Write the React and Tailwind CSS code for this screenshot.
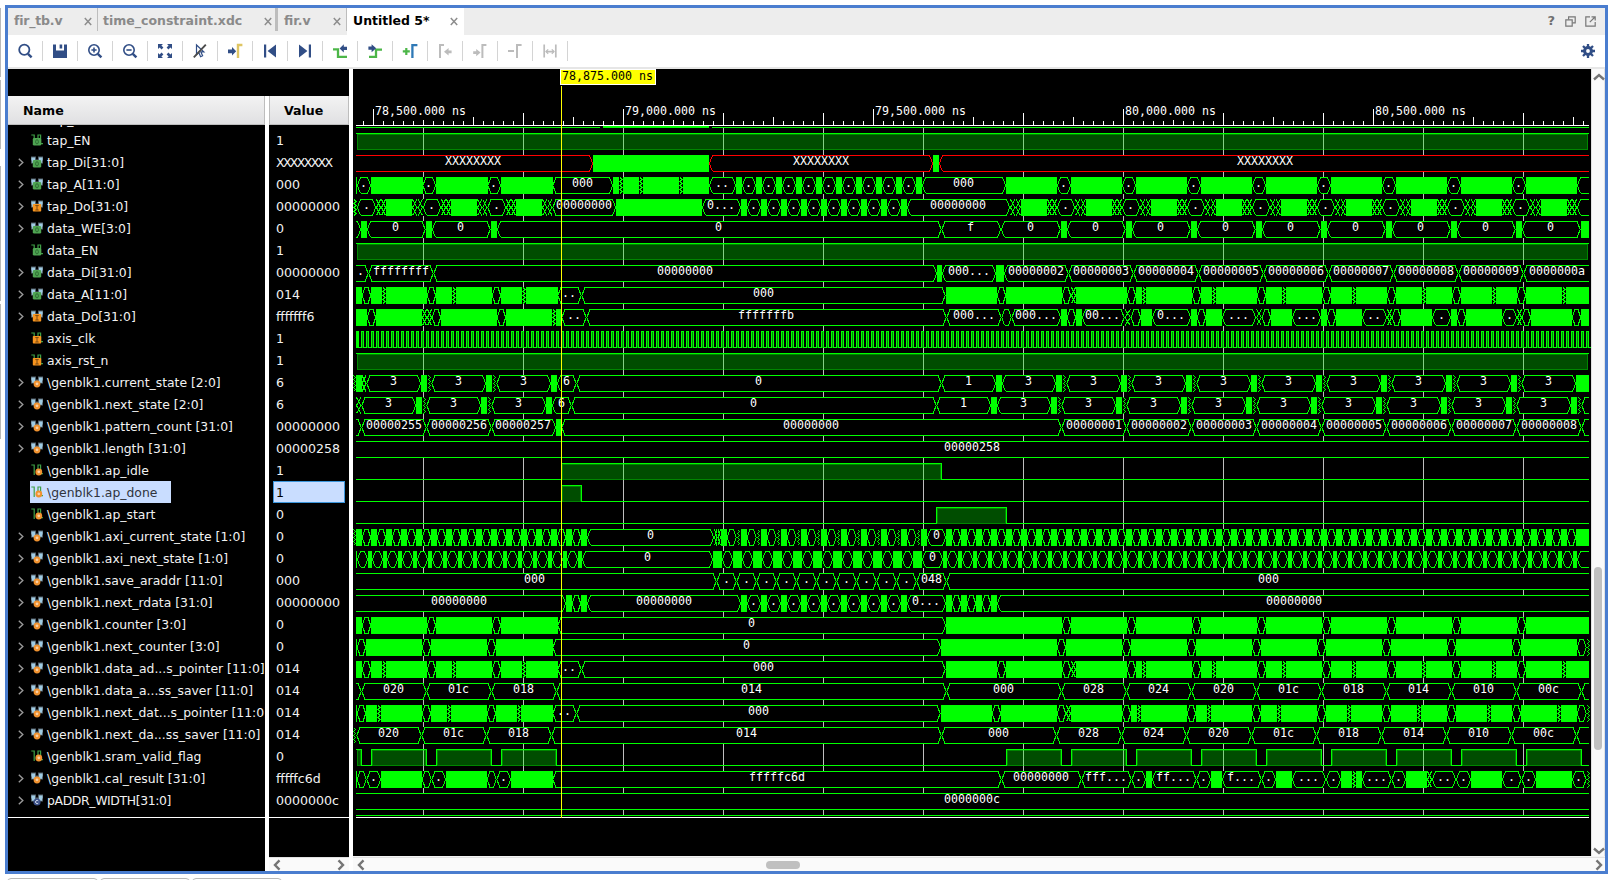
import React from "react";

const GREEN = "#00ff00";
const X_MIN = 356;
const X_MAX = 1589;
const ROW_TOP = 133;
const PITCH = 22;

const rep = (n, step, fn) => Array.from({ length: n }, (_, k) => fn(k * step)).join(" ");

const pointer = (d, first, last) =>
  `${first} s${382 - d} z${386 - d} s${427 - d} h${436 - d} s${452 - d} z${456 - d} s${492 - d} h${501 - d} s${522 - d} z${526 - d} s${557.5 - d} h${581.5 - d}:.. h${945.5 - d}:000 s${997 - d} h${1006 - d} s${1062 - d} h${1071 - d} z${1076 - d} s${1127 - d} h${1136 - d} s${1142 - d} z${1146 - d} s${1192 - d} h${1201 - d} s${1212 - d} z${1216 - d} s${1257 - d} h${1266 - d} s${1282 - d} z${1286 - d} s${1322 - d} h${1331 - d} s${1352 - d} z${1356 - d} s${1387 - d} h${1396 - d} s${1422 - d} z${1426 - d} s${1452 - d} h${1461 - d} s${1492 - d} z${1496 - d} s${1517 - d} h${1526 - d} s${1562 - d} z${1566 - d} ${last}`;

const saver = (d, first) =>
  `${first} h${426.5 - d}:020 h${491.5 - d}:01c h${556.5 - d}:018 h${946.5 - d}:014 h${1061.5 - d}:000 h${1126.5 - d}:028 h${1191.5 - d}:024 h${1256.5 - d}:020 h${1321.5 - d}:01c h${1386.5 - d}:018 h${1451.5 - d}:014 h${1516.5 - d}:010 h${1581.5 - d}:00c h1600`;

/* icon: s = scalar, b = bus; second letter: o = output, i = input, v = variable, c = constant.
   bus: start x followed by tokens "<kind><end x>[:label]", kind s = dense, h = value,
   r = undefined value, z = glitch. bit: high intervals. */
const SIGNALS = [
  { name: "tap_EN", value: "1", icon: "so", bit: [[340, 1600]] },
  { name: "tap_Di[31:0]", value: "XXXXXXXX", icon: "bo", bus: "340 r593:XXXXXXXX s709 r933:XXXXXXXX s939 r1600:XXXXXXXX" },
  {
    name: "tap_A[11:0]", value: "000", icon: "bo",
    bus: `356 s357 h371:. s422.5 h436:. s487.5 h501:. s552.5 h613:000 s619 z623 s639 z643 s679 z683 s709 h736:.. s742 ${rep(9, 20, (k) => `h${756 + k}:. s${762 + k}`)} h1006:000 ${rep(8, 65, (k) => `s${1057 + k} h${1071 + k}:.`)} s1577 h1600`,
  },
  {
    name: "tap_Do[31:0]", value: "00000000", icon: "bi",
    bus: `353 z357 h376:. z386 s412 z423 h441:. z451 s477 z487.5 h506:. z516 s542 z552.5 h616:00000000 s702 h741:0... s747 ${rep(8, 20, (k) => `h${761 + k}:. s${767 + k}`)} h1010:00000000 ${rep(8, 65, (k) => `z${1021 + k} s${1047 + k} z${1057 + k} h${1075 + k}:.`)} z1541 s1567 z1577 h1600`,
  },
  {
    name: "data_WE[3:0]", value: "0", icon: "bo",
    bus: `340 h361 s367 h425.5:0 s432 h490.5:0 s497 h941.5:0 h1001:f h1060.5:0 s1067 ${rep(7, 65, (k) => `h${1125.5 + k}:0 s${1132 + k}`)} h1580.5:0 s1589`,
  },
  { name: "data_EN", value: "1", icon: "so", bit: [[340, 1600]] },
  {
    name: "data_Di[31:0]", value: "00000000", icon: "bo",
    bus: "340 h368.5:. h433.5:ffffffff h937:00000000 s942 h996:000... s1004 h1068.5:00000002 h1133.5:00000003 h1198.5:00000004 h1263.5:00000005 h1328.5:00000006 h1393.5:00000007 h1458.5:00000008 h1523.5:00000009 h1600:0000000a",
  },
  { name: "data_A[11:0]", value: "014", icon: "bo", bus: pointer(0, "356 s362 h371", "s1589") },
  {
    name: "data_Do[31:0]", value: "fffffff6", icon: "bi",
    bus: "356 s367 h376 s422 z432 h441 s497 h506 s552 z556 s561.5 h586.5:.. h946.5:fffffffb h1001.5:000... h1011.5 h1061:000... s1067 h1076 s1082 h1124.5:00... z1131 h1141 s1152 h1191:0... s1197 h1206 s1222 h1256:... z1262 h1271 s1292 h1321:... s1327 h1336 s1362 h1387:.. z1392 h1401 s1432 h1451:. s1457 h1466 s1502 h1517:. z1522 h1531 s1572 h1581 s1589",
  },
  { name: "axis_clk", value: "1", icon: "si", clock: true },
  { name: "axis_rst_n", value: "1", icon: "si", bit: [[340, 1600]] },
  {
    name: "\\genblk1.current_state [2:0]", value: "6", icon: "bv",
    bus: `353 z356 s361.5 z366.5 h421:3 s427 z431.5 h486:3 s492 z496.5 h551:3 s557 h576.5:6 h941.5:0 h996:1 s1002 h1056:3 ${rep(8, 65, (k) => `s${1062 + k} z${1066.5 + k} h${1121 + k}:3`)} s1589`,
  },
  {
    name: "\\genblk1.next_state [2:0]", value: "6", icon: "bv",
    bus: `356 z361.5 h416:3 s422 z426.5 h481:3 s487 z491.5 h546:3 s552 h571.5:6 h936.5:0 h991:1 s997 h1051:3 ${rep(8, 65, (k) => `s${1057 + k} z${1061.5 + k} h${1116 + k}:3`)} s1577 z1581.5 h1600`,
  },
  {
    name: "\\genblk1.pattern_count [31:0]", value: "00000000", icon: "bv",
    bus: `340 h361.5 h426.5:00000255 h491.5:00000256 h556:00000257 s561.5 h1061.5:00000000 ${[1, 2, 3, 4, 5, 6, 7, 8].map((n) => `h${1061.5 + 65 * n}:0000000${n}`).join(" ")} h1600`,
  },
  { name: "\\genblk1.length [31:0]", value: "00000258", icon: "bv", bus: "340 h1600:00000258" },
  { name: "\\genblk1.ap_idle", value: "1", icon: "sv", bit: [[561, 941]] },
  { name: "\\genblk1.ap_done", value: "1", icon: "sv", bit: [[561, 581]], selected: true },
  { name: "\\genblk1.ap_start", value: "0", icon: "sv", bit: [[936, 1006]] },
  {
    name: "\\genblk1.axi_current_state [1:0]", value: "0", icon: "bv",
    bus: `353 z356 s362 ${rep(15, 15, (k) => `h${371 + k} s${377 + k}`)} h714:0 z721 s727 ${rep(10, 20, (k) => `h${736.5 + k} z${741 + k} s${747 + k}`)} h946:0 s952 ${rep(41, 15, (k) => `h${961 + k} s${967 + k}`)} h1576 s1589`,
  },
  {
    name: "\\genblk1.axi_next_state [1:0]", value: "0", icon: "bv",
    bus: `356 s357 h368 s372 ${rep(14, 15, (k) => `h${383 + k} s${387 + k}`)} h713:0 s722 ${rep(10, 20, (k) => `h${733 + k} s${742 + k}`)} h943:0 s947 ${rep(42, 15, (k) => `h${958 + k} s${962 + k}`)} h1600`,
  },
  {
    name: "\\genblk1.save_araddr [11:0]", value: "000", icon: "bv",
    bus: `340 h716.5:000 ${rep(10, 20, (k) => `h${736.5 + k}:.`)} h946.5:048 h1600:000`,
  },
  {
    name: "\\genblk1.next_rdata [31:0]", value: "00000000", icon: "bv",
    bus: `340 h566:00000000 s572 h581 s587 h741:00000000 s747 ${rep(8, 20, (k) => `h${761 + k}:. s${767 + k}`)} h946:0... s952 ${rep(3, 15, (k) => `h${961 + k} s${967 + k}`)} h1600:00000000`,
  },
  {
    name: "\\genblk1.counter [3:0]", value: "0", icon: "bv",
    bus: `356 s362 h371 s427 h436 s492 h501 s557.5 h946:0 ${rep(8, 65, (k) => `s${1062 + k} h${1071 + k}`)} s1589`,
  },
  {
    name: "\\genblk1.next_counter [3:0]", value: "0", icon: "bv",
    bus: `356 s357 h366 s422 h431 s487 h496 s552.5 h941:0 ${rep(8, 65, (k) => `s${1057 + k} h${1066 + k}`)} s1577 h1586.5 z1590`,
  },
  { name: "\\genblk1.data_ad...s_pointer [11:0]", value: "014", icon: "bv", bus: pointer(0, "356 s362 h371", "s1589") },
  { name: "\\genblk1.data_a...ss_saver [11:0]", value: "014", icon: "bv", bus: saver(0, "340 h361.5") },
  { name: "\\genblk1.next_dat...s_pointer [11:0]", value: "014", icon: "bv", bus: pointer(5, "356 s357 h366", "s1577 h1586.5 z1590") },
  { name: "\\genblk1.next_da...ss_saver [11:0]", value: "014", icon: "bv", bus: saver(5, "353 z356.5") },
  {
    name: "\\genblk1.sram_valid_flag", value: "0", icon: "sv",
    bit: [[340, 361], [371, 426], [436, 491], [501, 556], ...Array.from({ length: 9 }, (_, k) => [1006 + 65 * k, 1061 + 65 * k])],
  },
  {
    name: "\\genblk1.cal_result [31:0]", value: "fffffc6d", icon: "bv",
    bus: "356 s357 h366.5 h381:. s422 h431.5 h446:. s487 h496.5 h511:. s552.5 h1001.5:fffffc6d h1081.5:00000000 h1131.5:fff... h1146:. s1152 h1196.5:ff... h1211:. s1222 h1261.5:f... h1276:. s1292 h1326:... h1341:. s1352 z1356 s1362 h1391.5:... h1406:. s1427 z1432 h1456:.. h1471:. s1502 h1521.5:. h1536:. s1572 h1586.5:. z1590",
  },
  { name: "pADDR_WIDTH[31:0]", value: "0000000c", icon: "bc", bus: "340 h1600:0000000c" },
];

function MonoText({ x, y, fill = "#fff", children }) {
  return (
    <text x={x} y={y} fill={fill} className="font-['DejaVu_Sans_Mono',monospace] text-[11.63px] whitespace-pre">
      {children}
    </text>
  );
}

function Bus({ spec, top }) {
  const tokens = spec.trim().split(/\s+/);
  let x = parseFloat(tokens[0]);
  let solid = "";
  let line = "";
  let red = "";
  let black = "";
  const labels = [];
  const a = top + 0.5;
  const m = top + 8.5;
  const b = top + 16.5;
  for (const t of tokens.slice(1)) {
    const [head, label] = t.split(":");
    const kind = head[0];
    const end = parseFloat(head.slice(1));
    black += `M${Math.max(x, X_MIN)} ${top}H${Math.min(end, X_MAX)}V${top + 17}H${Math.max(x, X_MIN)}z`;
    if (kind === "s") {
      solid += `M${x} ${top}H${end}V${top + 17}H${x}z`;
    } else if (kind === "z") {
      const n = Math.max(1, Math.round((end - x) / 4.5));
      const w = (end - x) / n;
      for (let i = 0; i < n; i++) {
        const l = x + i * w + 0.5;
        const r = l + w - 1;
        if (n === 1 && w <= 4.6) {
          const c = (l + r) / 2;
          line += `M${c - 1} ${a}l2 2l-2 2l2 2l-2 2l2 2l-2 2l2 2l-2 2`;
        } else {
          line += `M${l} ${a}L${r} ${m}L${l} ${b}M${r} ${a}L${l} ${m}L${r} ${b}`;
        }
      }
    } else {
      const openL = x < X_MIN - 3;
      const openR = end > X_MAX + 3;
      const d = end - x < 11 ? 3 : 3.5;
      const l = openL ? X_MIN : x + d;
      const r = openR ? X_MAX : end - d;
      let p = `M${l} ${a}H${r}M${l} ${b}H${r}`;
      if (!openL) p += `M${l} ${a}L${x + 0.3} ${m}L${l} ${b}`;
      if (!openR) p += `M${r} ${a}L${end - 0.3} ${m}L${r} ${b}`;
      if (kind === "r") red += p;
      else line += p;
      if (label) {
        labels.push([(Math.max(x, 353) + Math.min(end, 1591)) / 2, label]);
      }
    }
    x = end;
  }
  return (
    <g>
      <path d={black} fill="#000" />
      <path d={solid} fill={GREEN} />
      <path d={line} stroke={GREEN} fill="none" />
      <path d={red} stroke="#ff0000" fill="none" />
      {labels.map(([cx, l], i) => (
        <MonoText key={i} x={Math.floor(cx - l.length * 3.5)} y={top + 10}>
          {l}
        </MonoText>
      ))}
    </g>
  );
}

function Bit({ high, top }) {
  let x = X_MIN;
  let line = "";
  return (
    <g>
      {high.map(([s, e], i) => {
        const s0 = Math.max(s, X_MIN + 1);
        const e0 = Math.min(e, X_MAX - 1);
        if (s > X_MIN) line += `M${x} ${top + 16.5}H${s + 0.5}V${top + 0.5}`;
        else line += `M${X_MIN} ${top + 0.5}`;
        line += `H${Math.min(e + 0.5, X_MAX)}`;
        if (e < X_MAX) line += `V${top + 16.5}`;
        x = e;
        return (
          <g key={i}>
            <rect x={s0} y={top} width={e0 - s0} height={17} fill="#00ff00" fillOpacity="0.3" />
            <rect x={s0 + (s > X_MIN ? 1.5 : 0.5)} y={top + 1.5} width={e0 - s0 - (s > X_MIN ? 2 : 1)} height={15} fill="none" stroke="#00ff00" strokeOpacity="0.32" />
          </g>
        );
      })}
      <path d={line + (x < X_MAX ? `M${x} ${top + 16.5}H${X_MAX}` : "")} stroke={GREEN} fill="none" />
    </g>
  );
}

function Clock({ top }) {
  const n = Math.floor((X_MAX - X_MIN) / 5);
  let bright = `M356 ${top}h2v17h-2z`;
  let dim = "";
  for (let k = 0; k <= n; k++) {
    const x = 356 + 5 * k;
    bright += `M${x} ${top}h3v17h-1v-16h-1v16h-1z M${x + 2} ${top + 16}h4v1h-4z`;
    dim += `M${x + 1} ${top + 1}h1v16h-1z`;
  }
  return (
    <g>
      <path d={dim} fill="#008a00" />
      <path d={bright} fill={GREEN} />
    </g>
  );
}

function Waveform() {
  const labels = [
    [373, "78,500.000 ns"],
    [623, "79,000.000 ns"],
    [873, "79,500.000 ns"],
    [1123, "80,000.000 ns"],
    [1373, "80,500.000 ns"],
  ];
  let ticks = "";
  for (let x = 363; x < 1589; x += 10) {
    const off = (((x - 373) % 250) + 250) % 250;
    let y = 121;
    if (off === 0) y = 109;
    else if (off === 50) y = 120;
    else if ((x - 423) % 100 === 0) y = 113;
    else if ((x - 373) % 50 === 0) y = 117;
    ticks += `M${x} ${y}h1V125h-1z`;
  }
  let grid = "";
  for (let x = 423; x < 1589; x += 100) grid += `M${x} 128h1V815h-1z`;
  return (
    <svg width="1238" height="787" viewBox="353 69 1238 787" shapeRendering="crispEdges" className="block bg-black">
      <path d={grid} fill="#bebebe" />
      <path d={ticks} fill="#fff" />
      <rect x="356" y="125" width="1233" height="1" fill="#fff" />
      <path d="M356 127h244v1H356zM603 126h106v2H603zM712 127h877v1H712z" fill={GREEN} />
      {SIGNALS.map((s, i) => {
        const top = ROW_TOP + PITCH * i;
        if (s.bus) return <Bus key={i} spec={s.bus} top={top} />;
        if (s.clock) return <Clock key={i} top={top} />;
        return <Bit key={i} high={s.bit} top={top} />;
      })}
      <rect x="356" y="815" width="1233" height="1" fill={GREEN} />
      <rect x="356" y="817" width="1233" height="1" fill="#fff" />
      {labels.map(([x, l]) => (
        <MonoText key={x} x={x + 2} y={115}>
          {l}
        </MonoText>
      ))}
      <rect x="561" y="86" width="1" height="732" fill="#ffff00" />
      <rect x="560" y="69" width="96" height="16" fill="#fff" />
      <rect x="561" y="70" width="94" height="14" fill="#ffff00" />
      <MonoText x={562} y={80} fill="#000">
        78,875.000 ns
      </MonoText>
    </svg>
  );
}

function SignalIcon({ kind }) {
  const bus = kind[0] === "b";
  const t = kind[1];
  const cx = bus ? 6 : 7.8;
  return (
    <svg width="12" height="12" viewBox="0 0 12 12" className="shrink-0">
      {bus ? (
        <g>
          <path d="M0 .6h5v3h2v-3h5v7H0z" fill="#57646e" />
          <path d="M.4 1.4H4v3l1 1.4v1H1V4.6H.4z" fill="#9fcbe3" />
          <path d="M11.6 1.4H8v3L7 5.8v1h4V4.6h.6z" fill="#9fcbe3" />
        </g>
      ) : (
        <path d="M.3 1h2.9v10M7 8V1h2.6v8.6H12" fill="none" stroke="#3fa046" strokeWidth="1.2" />
      )}
      {t === "o" && (
        <g>
          <rect x="1.8" y="4" width="8.4" height="7.6" rx="1.4" fill="#4fa552" />
          <ellipse cx="6" cy="7.8" rx="1.4" ry="2.1" fill="none" stroke="#2b6630" strokeWidth=".9" />
        </g>
      )}
      {t === "i" && (
        <g>
          <rect x="1.8" y="4" width="8.4" height="7.6" rx=".8" fill="#f7941e" />
          <path d="M4.3 5.6h3.4M6 5.6v4.4M4.3 10h3.4" stroke="#7a4a12" strokeWidth="1" />
        </g>
      )}
      {t === "v" && (
        <g>
          <circle cx={cx} cy="8" r="3.4" fill="#f0922f" />
          <circle cx={cx} cy="7.8" r="1.4" fill="#f9d0a4" />
        </g>
      )}
      {t === "c" && (
        <g>
          <circle cx="6" cy="8" r="3.6" fill="#3b4f86" />
          <path d="M7.3 6.9a1.6 1.6 0 1 0 0 2.2" fill="none" stroke="#dfe6f5" strokeWidth=".9" />
        </g>
      )}
    </svg>
  );
}

function Chevron({ dir, className = "", color = "#757575", w = 2.4 }) {
  const d = {
    up: "M2 8.5L7 4.2l5 4.3",
    down: "M2 4.5l5 4.3 5-4.3",
    left: "M9.5 2.4L5 7l4.5 4.6",
    right: "M4.5 2.4L9 7l-4.5 4.6",
  }[dir];
  return (
    <svg width="14" height="14" viewBox="0 0 14 14" className={`shrink-0 ${className}`}>
      <path d={d} fill="none" stroke={color} strokeWidth={w} />
    </svg>
  );
}

function NameColumn() {
  return (
    <div className="flex w-[257px] flex-col overflow-hidden bg-black">
      <div className="flex h-[29px] shrink-0 items-center border-r border-b border-[#bdbdbd] bg-linear-to-b from-[#f3f3f3] to-[#e0e0e2] pt-[2px] pl-[15px] text-[12.6px] font-bold text-black">
        Name
      </div>
      <div className="flex h-[693px] flex-col justify-start overflow-hidden border-b border-white text-[12.4px]">
        <div className="flex h-1 shrink-0 items-end overflow-hidden pl-[39px] text-white">
          <span className="leading-[18px]">tap_WE</span>
        </div>
        {SIGNALS.map((s) => (
          <div key={s.name} className="flex h-[22px] shrink-0 items-center whitespace-nowrap text-[#f2f2f2]">
            <span className="flex w-[22px] shrink-0 justify-center pl-[3px]">
              {s.icon[0] === "b" && (
                <svg width="6" height="9" viewBox="0 0 6 9">
                  <path d="M.8.8L4.8 4.5.8 8.2" fill="none" stroke="#9a9a9a" strokeWidth="1.4" />
                </svg>
              )}
            </span>
            <span
              className={
                s.selected
                  ? "flex h-[22px] w-[141px] items-center gap-[4px] bg-[#c9ddff] pl-px text-[#30343c]"
                  : "flex h-[22px] items-center gap-[4px] pl-px"
              }
            >
              <SignalIcon kind={s.icon} />
              <span className={s.icon === "bc" ? "pt-[2px] tracking-[-0.35px]" : "pt-[2px]"}>{s.name}</span>
            </span>
          </div>
        ))}
      </div>
    </div>
  );
}

function ValueColumn() {
  return (
    <div className="flex w-[80px] flex-col overflow-hidden bg-black">
      <div className="flex h-[29px] shrink-0 items-center border-r border-b border-l border-[#bdbdbd] bg-linear-to-b from-[#f3f3f3] to-[#e0e0e2] pt-[2px] pl-[14px] text-[12.6px] font-bold text-black">
        Value
      </div>
      <div className="flex h-[693px] flex-col overflow-hidden border-b border-white px-1 pt-1">
        {SIGNALS.map((s) => (
          <div
            key={s.name}
            className={
              s.selected
                ? "flex h-[22px] shrink-0 items-center border border-[#3c96dc] bg-[#c9ddff] pl-[2px] text-black"
                : "flex h-[22px] shrink-0 items-center pl-[3px] text-[#f2f2f2]"
            }
          >
            <span className={s.value[0] === "X" ? "pt-[2px] tracking-[-1.7px]" : "pt-[2px]"}>{s.value}</span>
          </div>
        ))}
      </div>
      <div className="flex-1" />
      <div className="flex h-[14px] items-center justify-between border-t border-[#e2e2e2] bg-[#fafafa] px-px">
        <Chevron dir="left" />
        <Chevron dir="right" />
      </div>
    </div>
  );
}

const NAVY = "#314e86";
const LGREEN = "#4cb648";
const GREY = "#bcbcbc";

const TOOLS = [
  <g key="a" fill="none" stroke={NAVY} strokeWidth="1.8"><circle cx="7.3" cy="6.8" r="5.1" /><path d="M11 10.8l3.6 3.6" strokeWidth="2.4" /></g>,
  <g key="b"><path d="M1 1.5h3v6h8v-6h3V15H1z" fill={NAVY} /><path d="M7.6 1.5h2.6v4H7.6z" fill={NAVY} /></g>,
  <g key="c" fill="none" stroke={NAVY} strokeWidth="1.6"><circle cx="7" cy="7" r="5.2" /><path d="M4.4 7h5.2M7 4.4v5.2" /><path d="M10.8 10.8l3.6 3.6" strokeWidth="2.4" /></g>,
  <g key="d" fill="none" stroke={NAVY} strokeWidth="1.6"><circle cx="7" cy="7" r="5.2" /><path d="M4.4 7h5.2" /><path d="M10.8 10.8l3.6 3.6" strokeWidth="2.4" /></g>,
  <g key="e"><path d="M1 1h5L4.4 2.6l2 2-1.8 1.8-2-2L1 6zM15 1v5l-1.6-1.6-2 2-1.8-1.8 2-2L10 1zM1 15v-5l1.6 1.6 2-2 1.8 1.8-2 2L6 15zM15 15h-5l1.6-1.6-2-2 1.8-1.8 2 2L15 10z" fill={NAVY} /></g>,
  <g key="f" fill="none"><path d="M4.5 2v9.5l2.3-2 1.8 4.2 2-.9-1.8-4h3z" stroke={NAVY} strokeWidth="1.2" /><path d="M13.8 1.6L1.8 14.4" stroke="#4c4c4c" strokeWidth="1.9" /></g>,
  <g key="g"><path d="M1 6.4h4V4l4.2 4.3L5 12.6v-2.4H1z" fill={NAVY} /><path d="M11 15V2h4.4" fill="none" stroke="#dfc563" strokeWidth="2.4" /></g>,
  <g key="h" fill={NAVY}><path d="M2 1.5h2.2v13H2zM14 1.5v13L5.6 8z" /></g>,
  <g key="i" fill={NAVY}><path d="M11.8 1.5H14v13h-2.2zM2 1.5v13L10.4 8z" /></g>,
  <g key="j"><path d="M1 6.3h5v7.5h9" fill="none" stroke={LGREEN} strokeWidth="2.3" /><path d="M15 3.7h-3.2V1.2L7.6 5.4l4.2 4V7H15z" fill={NAVY} /></g>,
  <g key="k"><path d="M2 13.8h7V6.6h6" fill="none" stroke={LGREEN} strokeWidth="2.3" /><path d="M1.4 3.5h3.2V1.2l4.6 4-4.6 4V6.8H1.4z" fill={NAVY} /></g>,
  <g key="l" fill="none"><path d="M.8 8.4h7M4.3 4.9v7" stroke={LGREEN} strokeWidth="2.2" /><path d="M10.4 15V2.2h5" stroke="#2f79b6" strokeWidth="2.3" /></g>,
  <g key="m"><path d="M3 15V2h4" fill="none" stroke={GREY} strokeWidth="2" /><path d="M14.6 7.5h-3V5L7 8.8l4.6 3.8v-2.4h3z" fill={GREY} /></g>,
  <g key="n"><path d="M10.4 15V2h4" fill="none" stroke={GREY} strokeWidth="2" /><path d="M1.2 8.3h3V6l4.4 3.6-4.4 3.6V11h-3z" fill={GREY} /></g>,
  <g key="o" fill="none" stroke={GREY} strokeWidth="2"><path d="M1 8h6M10 15V2h4.6" /></g>,
  <g key="p" fill="none" stroke={GREY} strokeWidth="1.7"><path d="M2.2 14.5v-13M13.8 14.5v-13M4 8.6h8" /><path d="M6.2 6.4L4 8.6l2.2 2.2M9.8 6.4L12 8.6l-2.2 2.2" strokeWidth="1.3" /></g>,
];

function Toolbar() {
  return (
    <div className="flex h-8 shrink-0 items-center bg-white">
      {TOOLS.map((icon, i) => (
        <div key={i} className="flex h-5 w-[35px] items-center justify-center border-r border-[#d4d4d4]">
          <svg width="16" height="16" viewBox="0 0 16 16">{icon}</svg>
        </div>
      ))}
      <div className="flex-1" />
      <svg width="14" height="14" viewBox="0 0 14 14" className="mr-[10px]">
        <circle cx="7" cy="7" r="3.4" fill="none" stroke={NAVY} strokeWidth="3" />
        <path d="M7 0v3M7 11v3M0 7h3M11 7h3M2 2l2.2 2.2M9.8 9.8L12 12M12 2L9.8 4.2M4.2 9.8L2 12" stroke={NAVY} strokeWidth="2.3" />
      </svg>
    </div>
  );
}

function Close() {
  return (
    <svg width="8" height="9" viewBox="0 0 8 9" className="mt-[3px] shrink-0">
      <path d="M.8 1l6.4 7M7.2 1L.8 8" stroke="#8d8d8d" strokeWidth="1.5" />
    </svg>
  );
}

function Tab({ label, className, active }) {
  return (
    <div className={`flex shrink-0 items-center justify-between ${className}`}>
      <span className={active ? "pt-[3px] text-black" : "pt-[3px] text-[#8a8a8a]"}>{label}</span>
      <Close />
    </div>
  );
}

export default function App() {
  return (
    <div className="flex h-[880px] w-[1611px] flex-col overflow-hidden bg-white font-['DejaVu_Sans',sans-serif] text-[12.6px]">
      <div className="flex h-[874px]">
        <div className="flex w-[5px] flex-col items-start pt-2">
          <div className="h-[69px] w-px bg-[#b8b8b8]" />
          <div className="mt-[3px] h-[69px] w-px bg-[#b8b8b8]" />
          <div className="mt-[17px] h-[135px] w-px bg-[#b8b8b8]" />
          <div className="mt-[3px] h-[135px] w-px bg-[#b8b8b8]" />
        </div>
        <div className="mt-[5px] flex h-[869px] w-[1603px] flex-col border-[3px] border-[#4a7dcf] bg-white">
          <div className="flex h-[27px] shrink-0 bg-[#ededed] text-[12.5px] font-bold">
            <Tab label="fir_tb.v" className="h-[23px] w-[90px] border-r border-[#bdbdbd] pr-[5px] pl-[6px] tracking-[-0.2px]" />
            <Tab label="time_constraint.xdc" className="h-[23px] w-[180px] border-r-[3px] border-[#bdbdbd] pr-[3px] pl-[5px]" />
            <Tab label="fir.v" className="h-[23px] w-[69px] border-r border-[#bdbdbd] pr-[5px] pl-[6px]" />
            <Tab label="Untitled 5*" active className="h-[27px] w-[117px] bg-white pr-[6px] pb-1 pl-[6px]" />
            <div className="flex-1" />
            <div className="flex items-center gap-[9px] pr-[9px] pb-px text-[#707070]">
              <span className="pr-px text-[13px]">?</span>
              <svg width="11" height="11" viewBox="0 0 11 11" fill="none" stroke="#777" strokeWidth="1.2">
                <path d="M3.6 3.5V.8h6.6v6H7.5" />
                <path d="M.8 3.8h6.4v6.4H.8z" />
              </svg>
              <svg width="11" height="11" viewBox="0 0 11 11" fill="none" stroke="#777" strokeWidth="1.2">
                <path d="M5 .8H.8v9.4h9.4V6" />
                <path d="M6.5.8h3.7v3.7M10 1L4.8 6.2" />
              </svg>
            </div>
          </div>
          <Toolbar />
          <div className="h-[2px] shrink-0 bg-[#e6e6e6]" />
          <div className="flex h-[802px]">
            <div className="flex w-[341px] flex-col">
              <div className="h-[27px] bg-black" />
              <div className="flex flex-1 gap-1">
                <NameColumn />
                <ValueColumn />
              </div>
            </div>
            <div className="ml-1 flex w-[1252px] flex-col">
              <div className="flex h-[788px] border-b border-[#f4f4f4]">
                <Waveform />
                <div className="flex w-[14px] flex-col items-center border-r border-l border-[#e2e2e2] bg-[#fafafa] pt-px">
                  <Chevron dir="up" className="mt-px ml-px" />
                  <div className="mt-[482px] h-[183px] w-2 rounded-full bg-[#c0c0c0]" />
                  <div className="flex-1" />
                  <Chevron dir="down" className="mb-[-2px] ml-px" />
                </div>
              </div>
              <div className="flex h-[14px] items-center border-t border-[#e2e2e2] bg-[#fafafa]">
                <Chevron dir="left" className="ml-px" />
                <div className="ml-[398px] h-2 w-[34px] rounded-full bg-[#c0c0c0]" />
                <div className="flex-1" />
                <Chevron dir="right" className="mr-[-1px]" />
              </div>
            </div>
          </div>
        </div>
      </div>
      <div className="flex gap-[2px] pt-1 pl-[7px]">
        <div className="h-2 w-[91px] rounded-t-sm border border-[#b8b8b8]" />
        <div className="h-2 w-[90px] rounded-t-sm border border-[#b8b8b8]" />
        <div className="h-2 w-[90px] rounded-t-sm border border-[#b8b8b8]" />
      </div>
    </div>
  );
}
